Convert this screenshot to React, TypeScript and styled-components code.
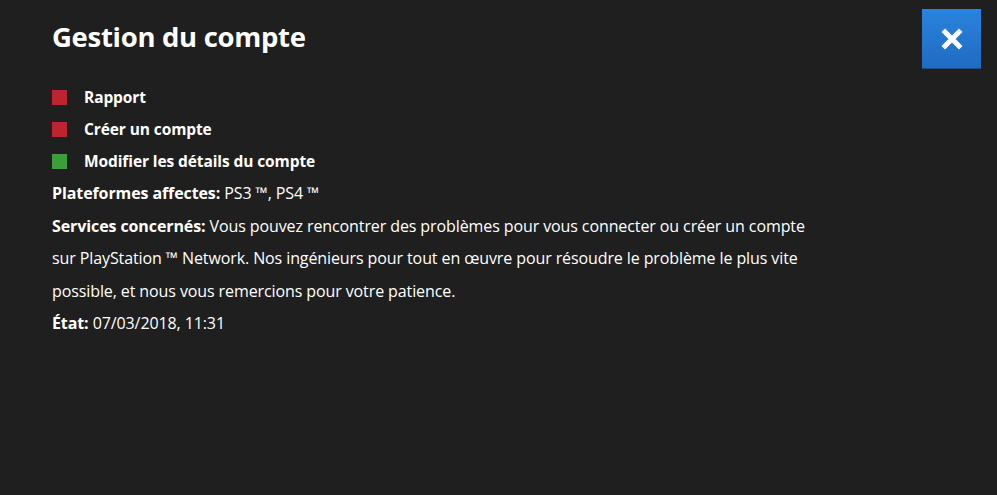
import React from 'react'
import styled, { createGlobalStyle } from 'styled-components'

const GlobalStyle = createGlobalStyle`
    html, body {
        margin: 0;
        padding: 0;
        background-color: #1f1f1f;
    }
    body {
        font-family: 'Open Sans', 'Noto Sans', sans-serif;
        color: #ffffff;
    }
`

const Page = styled.div`
    position: relative;
    min-height: 495px;
    padding: 17px 52px 0;
    box-sizing: border-box;
`

const Title = styled.h1`
    margin: 0 0 29px;
    font-size: 27.5px;
    font-weight: 700;
    line-height: 40px;
    letter-spacing: -0.3px;
`

const CloseButton = styled.button`
    position: absolute;
    top: 9px;
    right: 16px;
    width: 59px;
    height: 60px;
    padding: 0;
    border: none;
    border-bottom: 1px solid #1b4f8c;
    background: linear-gradient(#2a83dd, #1f6bc2);
    display: flex;
    align-items: center;
    justify-content: center;
    cursor: pointer;
`

const StatusList = styled.ul`
    list-style: none;
    margin: 0 0 5px;
    padding: 0;
    display: flex;
    flex-direction: column;
    gap: 10px;
`

const StatusItem = styled.li`
    display: flex;
    align-items: center;
    gap: 17px;
    height: 22px;
    font-size: 15.5px;
    font-weight: 700;
    letter-spacing: -0.1px;
`

const StatusSquare = styled.span<{ ok: boolean }>`
    width: 15px;
    height: 15px;
    flex-shrink: 0;
    background-color: ${({ ok }) => (ok ? '#3a9f38' : '#be2330')};
`

const Info = styled.p`
    margin: 0;
    max-width: 760px;
    font-size: 16px;
    line-height: 32.5px;
    letter-spacing: -0.1px;
`

const Label = styled.strong`
    font-weight: 700;
`

const statuses = [
    { label: 'Rapport', ok: false },
    { label: 'Créer un compte', ok: false },
    { label: 'Modifier les détails du compte', ok: true },
]

const App: React.FC = () => {
    return (
        <Page>
            <GlobalStyle />
            <Title>Gestion du compte</Title>
            <CloseButton aria-label="Fermer">
                <svg width="22" height="22" viewBox="0 0 22 22">
                    <path
                        d="M4 4 L18 18 M18 4 L4 18"
                        stroke="#ffffff"
                        strokeWidth="5"
                        strokeLinecap="square"
                    />
                </svg>
            </CloseButton>
            <StatusList>
                {statuses.map((s) => (
                    <StatusItem key={s.label}>
                        <StatusSquare ok={s.ok} />
                        {s.label}
                    </StatusItem>
                ))}
            </StatusList>
            <Info>
                <Label>Plateformes affectes:</Label> PS3 ™, PS4 ™
            </Info>
            <Info>
                <Label>Services concernés:</Label> Vous pouvez rencontrer des
                problèmes pour vous connecter ou créer un compte sur PlayStation
                ™ Network. Nos ingénieurs pour tout en œuvre pour résoudre le
                problème le plus vite possible, et nous vous remercions pour
                votre patience.
            </Info>
            <Info>
                <Label>État:</Label> 07/03/2018, 11:31
            </Info>
        </Page>
    )
}

export default App
